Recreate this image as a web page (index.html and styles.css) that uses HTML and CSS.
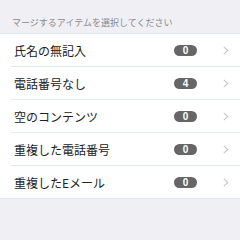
FILE: index.html
```html
<!DOCTYPE html>
<html lang="ja">
<head>
<meta charset="utf-8">
<link rel="stylesheet" href="styles.css">
</head>
<body>
<div class="header">マージするアイテムを選択してください</div>
<ul class="list">
  <li class="row"><span class="label">氏名の無記入</span><span class="badge">0</span><svg class="chev" width="6" height="9" viewBox="0 0 6 9"><path d="M0.8 0.8 L4.8 4.5 L0.8 8.2" fill="none" stroke="#c7c7cc" stroke-width="1.1"/></svg></li>
  <li class="row"><span class="label">電話番号なし</span><span class="badge">4</span><svg class="chev" width="6" height="9" viewBox="0 0 6 9"><path d="M0.8 0.8 L4.8 4.5 L0.8 8.2" fill="none" stroke="#c7c7cc" stroke-width="1.1"/></svg></li>
  <li class="row"><span class="label">空のコンテンツ</span><span class="badge">0</span><svg class="chev" width="6" height="9" viewBox="0 0 6 9"><path d="M0.8 0.8 L4.8 4.5 L0.8 8.2" fill="none" stroke="#c7c7cc" stroke-width="1.1"/></svg></li>
  <li class="row"><span class="label">重複した電話番号</span><span class="badge">0</span><svg class="chev" width="6" height="9" viewBox="0 0 6 9"><path d="M0.8 0.8 L4.8 4.5 L0.8 8.2" fill="none" stroke="#c7c7cc" stroke-width="1.1"/></svg></li>
  <li class="row"><span class="label">重複したEメール</span><span class="badge">0</span><svg class="chev" width="6" height="9" viewBox="0 0 6 9"><path d="M0.8 0.8 L4.8 4.5 L0.8 8.2" fill="none" stroke="#c7c7cc" stroke-width="1.1"/></svg></li>
</ul>
</body>
</html>
```
FILE: styles.css
```css
html, body {
  margin: 0;
  padding: 0;
  background: #efeff4;
  font-family: "Noto Sans CJK JP", "Noto Sans", sans-serif;
}
.header {
  height: 33px;
  box-sizing: border-box;
  padding: 0 0 4px 12px;
  display: flex;
  align-items: flex-end;
  font-size: 9px;
  line-height: 12px;
  color: #8a8a8f;
}
.list {
  list-style: none;
  margin: 0;
  padding: 0 0 0 11px;
  background: #fff;
  border-top: 1px solid #dde8ef;
  border-bottom: 1px solid #dde8ef;
}
.row {
  height: 32px;
  display: flex;
  align-items: center;
  padding-left: 3px;
  padding-right: 11px;
  border-bottom: 1px solid #e3ecf2;
}
.row:last-child {
  border-bottom: none;
}
.label {
  flex: 1;
  font-size: 12px;
  color: #222;
}
.badge {
  width: 23px;
  height: 11px;
  border-radius: 6px;
  background: #666;
  color: #fff;
  font-family: "Liberation Sans", sans-serif;
  font-size: 10px;
  font-weight: bold;
  line-height: 11px;
  text-align: center;
  margin-right: 26px;
}
.chev {
  display: block;
}
```
